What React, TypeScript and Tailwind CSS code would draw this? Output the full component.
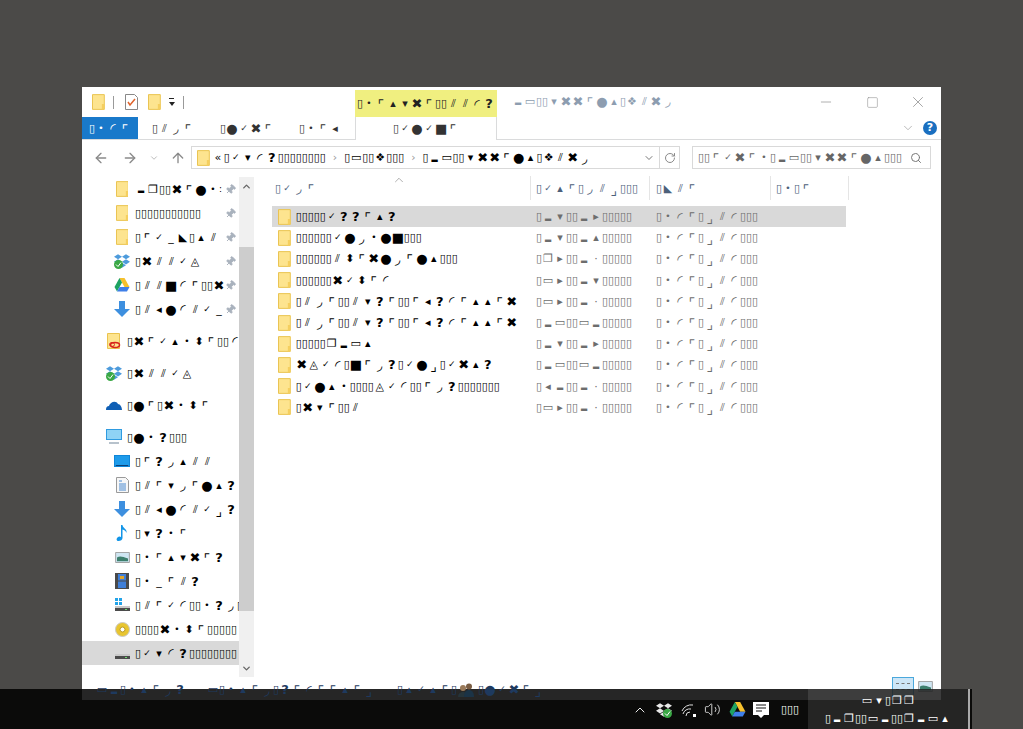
import { ArrowLeft, ArrowRight, ArrowUp, ChevronDown, ChevronUp, RotateCw, Search, Volume2, Pin, X, Minus, Square } from "lucide-react";
import { FaDropbox } from "react-icons/fa";
import type { ReactNode } from "react";

const glyphClass = (c: string) => {
  if (c === "▯") return "inline-block w-[6px] text-center text-[11px]";
  if (c === ":") return "inline-block w-[3px] text-center text-[9px]";
  if ("✓•".includes(c)) return "inline-block w-[12px] text-center text-[9px]";
  if (c === "?") return "inline-block w-[12px] text-center text-[13px] font-bold";
  if ("●■".includes(c)) return "inline-block w-[12px] text-center text-[13px]";
  if ("⌜⌟".includes(c)) return "inline-block w-[12px] pt-[3px] text-center text-[14px]";
  if ("◜◞".includes(c)) return "inline-block w-[12px] text-center text-[14px]";
  if (c === "✖") return "inline-block w-[12px] text-center text-[13px]";
  if (c === "▂") return "inline-block w-[12px] text-center text-[8px]";
  return "inline-block w-[12px] text-center text-[11px]";
};

// every character sits in its own cell, the tofu boxes are narrow
function Glyphs({ text, className = "" }: { text: string; className?: string }) {
  return (
    <span className={`inline-flex items-center whitespace-nowrap leading-none ${className}`}>
      {Array.from(text).map((c, i) => (
        <span key={i} className={glyphClass(c)}>
          {c}
        </span>
      ))}
    </span>
  );
}

function Folder({ size = 16 }: { size?: number }) {
  return (
    <svg width={size * 0.8} height={size} viewBox="0 0 13 16" className="shrink-0">
      <path d="M.5.5h12v15H.5z" fill="#fde48f" stroke="#eac34f" />
      <path d="M10 10h2.500v5.500H10z" fill="#f5cf5f" />
    </svg>
  );
}

function DropboxIcon({ tray }: { tray?: boolean }) {
  return (
    <span className={`relative flex h-[16px] w-[16px] shrink-0 ${tray ? "text-[#e8e8e8]" : "text-[#4d9bdc]"}`}>
      <FaDropbox size={16} />
      <svg width="9" height="9" viewBox="0 0 9 9" className={`absolute bottom-0 ${tray ? "right-0" : "left-0"}`}>
        <circle cx="4.500" cy="4.500" r="4.500" fill="#3aa845" />
        <path d="M2 4.500l2 2 3-4" fill="none" stroke="#fff" />
      </svg>
    </span>
  );
}

function DriveIcon({ size = 16 }: { size?: number }) {
  return (
    <svg width={size} height={size} viewBox="0 0 16 16" className="shrink-0">
      <path d="M5.500 1h5l5 9h-5z" fill="#f6c02c" />
      <path d="M5.500 1L.5 10l2.500 4.500L8 5.500z" fill="#1ea362" />
      <path d="M3 14.500h10l2.500-4.500h-10z" fill="#3f7fe8" />
    </svg>
  );
}

function DownArrow() {
  return (
    <svg width="16" height="16" viewBox="0 0 16 16" className="shrink-0">
      <path d="M5 0h6v8h5l-8 8-8-8h5z" fill="#3d8fdf" />
    </svg>
  );
}

function CloudFolder() {
  return (
    <svg width="14" height="16" viewBox="0 0 14 16" className="shrink-0">
      <path d="M.5.500h12v15H.5z" fill="#fde48f" stroke="#eac34f" />
      <ellipse cx="8" cy="12" rx="4.500" ry="2.500" fill="none" stroke="#d8261c" strokeWidth="1.500" />
      <ellipse cx="5" cy="11.500" rx="2.500" ry="2" fill="none" stroke="#d8261c" />
    </svg>
  );
}

function OneDriveIcon() {
  return (
    <svg width="16" height="10" viewBox="0 0 16 10" className="shrink-0">
      <path d="M0 10c0-3 1-4 3-4 1-4 7-6 9-2 2 0 4 3 4 6z" fill="#0f5fb5" />
    </svg>
  );
}

function MonitorIcon() {
  return (
    <svg width="16" height="16" viewBox="0 0 16 16" className="shrink-0">
      <path d="M0 0h16v11H0z" fill="#2f9be0" />
      <path d="M1 1h14v9H1z" fill="#8fd3f5" />
      <path d="M3 13h10v2H3z" fill="#b7c2cc" />
    </svg>
  );
}

function DesktopIcon() {
  return (
    <svg width="16" height="12" viewBox="0 0 16 12" className="shrink-0">
      <path d="M0 0h16v12H0z" fill="#0f86d8" />
      <path d="M1 1h14v9H1z" fill="#1e9bea" />
      <path d="M2 10.500h12" stroke="#0b3f75" />
    </svg>
  );
}

function DocIcon() {
  return (
    <svg width="13" height="16" viewBox="0 0 13 16" className="shrink-0">
      <path d="M.5.500h9l3 3v12H.5z" fill="#f7f7f7" stroke="#9a9a9a" />
      <path d="M3 4h3M3 7h7M3 9h7M3 11h7M3 13h7" stroke="#4b8ad0" />
    </svg>
  );
}

function MusicIcon() {
  return (
    <svg width="12" height="16" viewBox="0 0 12 16" className="shrink-0">
      <path d="M5 0h1.500c0 3 5 4 4 8-.5-2-2-3-4-3.500V13c0 2-2 3-4 3S0 14 1.500 12.500 4 11.500 5 12z" fill="#1295e8" />
    </svg>
  );
}

function PictureIcon() {
  return (
    <svg width="15" height="11" viewBox="0 0 16 12" className="shrink-0">
      <path d="M.5.500h15v11H.5z" fill="#cfe6f2" stroke="#9b9b9b" />
      <path d="M2 6c3-2 6-1 12 1v3H2z" fill="#3d7f6d" />
    </svg>
  );
}

function FilmIcon() {
  return (
    <svg width="14" height="16" viewBox="0 0 14 16" className="shrink-0">
      <path d="M0 0h14v16H0z" fill="#4a4a4a" />
      <path d="M3 1h8v6.500H3z" fill="#3f7fd8" />
      <path d="M3 8.500h8V15H3z" fill="#3f7fd8" />
      <path d="M5 3h4v3H5z" fill="#e0a52b" />
    </svg>
  );
}

function DriveBox({ win }: { win?: boolean }) {
  return (
    <svg width="15" height="14" viewBox="0 0 15 14" className="shrink-0">
      {win && <path d="M0 0h3v3H0zM4 0h3v3H4zM0 4h3v3H0zM4 4h3v3H4z" fill="#22a3e8" />}
      <path d="M0 8h15v2H0z" fill="#c9c9c9" />
      <path d="M0 10h15v3H0z" fill="#4b4b4b" />
      <path d="M10 11h2v1h-2z" fill="#6fe06f" />
    </svg>
  );
}

function DiscIcon() {
  return (
    <svg width="15" height="15" viewBox="0 0 15 15" className="shrink-0">
      <circle cx="7.500" cy="7.500" r="7" fill="#e8c530" stroke="#c9c9c9" />
      <circle cx="7.500" cy="7.500" r="2.500" fill="#fff" stroke="#b99a20" />
    </svg>
  );
}

function NavRow({ icon, text, indent = 2, pin, selected }: { icon: ReactNode; text: string; indent?: number; pin?: boolean; selected?: boolean }) {
  return (
    <div className={`flex h-[24px] items-center ${indent === 2 ? "pl-[32px]" : "pl-[24px]"} ${selected ? "bg-[#d9d9d9]" : ""}`}>
      <span className="flex w-[16px] shrink-0 items-center justify-center">{icon}</span>
      <span className="ml-[5px] flex min-w-0 flex-1 items-center overflow-hidden">
        <Glyphs text={text} />
      </span>
      {pin && <Pin size={11} className="mr-[3px] shrink-0 rotate-45 text-[#a9b2bd]" fill="#a9b2bd" />}
    </div>
  );
}

const TYPE = "▯•◜⌜▯⌟⫽◜▯▯▯";

const files = [
  ["▯▯▯▯▯✓??⌜▴?", "▯▂▾▯▯▂▸▯▯▯▯▯"],
  ["▯▯▯▯▯▯✓●◞•●■▯▯▯", "▯▂▾▯▯▂▴▯▯▯▯▯"],
  ["▯▯▯▯▯▯⫽⬍⌜✖●◞⌜●▴▯▯▯", "▯❐▸▯▯▂·▯▯▯▯▯"],
  ["▯▯▯▯▯▯✖✓⬍⌜◜", "▯▭▸▯▯▂▾▯▯▯▯▯"],
  ["▯⫽◞⌜▯▯⫽▾?⌜▯▯⌜◂?◜⌜▴▴⌜✖", "▯▭▸▯▯▂·▯▯▯▯▯"],
  ["▯⫽◞⌜▯▯⫽▾?⌜▯▯⌜◂?◜⌜▴▴⌜✖", "▯▂▭▯▯▭▂▯▯▯▯▯"],
  ["▯▯▯▯▯❐▂▭▴", "▯▂▾▯▯▂▸▯▯▯▯▯"],
  ["✖◬✓◜▯■⌜◞?▯✓●⌟▯✓✖▴?", "▯▂▭▯▯▭▂▯▯▯▯▯"],
  ["▯✓●▴•▯▯▯▯◬✓◜▯▯⌜◞?▯▯▯▯▯▯▯", "▯◂▂▯▯▂·▯▯▯▯▯"],
  ["▯✖▾⌜▯▯⫽", "▯▭▸▯▯▂·▯▯▯▯▯"],
];

export default function App() {
  return (
    <div className="relative h-[729px] w-[1023px] overflow-hidden bg-[#4b4a48] pt-[87px] pl-[82px] font-['DejaVu_Sans',sans-serif]">
      <div className="flex h-[613px] w-[859px] flex-col bg-white">
        {/* title bar */}
        <div className="flex h-[30px] shrink-0">
          <div className="flex w-[273px] items-center pl-[10px]">
            <Folder />
            <span className="ml-[8px] h-[13px] w-px bg-[#9a9a9a]" />
            <svg width="13" height="16" viewBox="0 0 13 16" className="ml-[11px]">
              <path d="M.5.500h9l3 3v12H.5z" fill="#fff" stroke="#888" />
              <path d="M3 8l2 3 5-6" fill="none" stroke="#e0632b" strokeWidth="1.500" />
            </svg>
            <span className="ml-[10px] flex"><Folder /></span>
            <span className="ml-[8px] flex h-[8px] w-[5px] flex-col justify-between">
              <span className="h-px w-[5px] bg-[#222]" />
              <span className="h-0 w-0 border-x-[3px] border-t-[4px] border-x-transparent border-t-[#222]" />
            </span>
            <span className="ml-[9px] h-[13px] w-px bg-[#9a9a9a]" />
          </div>
          <div className="mt-[3px] flex h-[27px] w-[142px] items-center justify-center bg-[#f0ef80] text-[#222]">
            <Glyphs text="▯•⌜▴▾✖⌜▯▯⫽⫽◜?" />
          </div>
          <div className="ml-[15px] flex items-center pb-[2px] text-[#8d9db0]">
            <Glyphs text="▂▭▯▯▾✖✖⌜●▴▯❖⫽✖◞" />
          </div>
          <div className="ml-auto flex text-[#8a8a8a]">
            <span className="flex w-[46px] items-center justify-center"><Minus size={16} strokeWidth={1} /></span>
            <span className="flex w-[46px] items-center justify-center"><Square size={13} strokeWidth={1} /></span>
            <span className="flex w-[46px] items-center justify-center"><X size={18} strokeWidth={1} /></span>
          </div>
        </div>

        {/* ribbon tabs */}
        <div className="flex h-[23px] shrink-0 border-b border-[#dadbdc] text-[#333]">
          <div className="flex w-[56px] items-center justify-center bg-[#1979ca] text-white">
            <Glyphs text="▯•◜⌜" />
          </div>
          <div className="flex w-[68px] items-center pl-[14px]"><Glyphs text="▯⫽◞⌜" /></div>
          <div className="flex w-[79px] items-center pl-[14px]"><Glyphs text="▯●✓✖⌜" /></div>
          <div className="flex w-[70px] items-center pl-[14px]"><Glyphs text="▯•⌜◂" /></div>
          <div className="-mb-px flex w-[142px] items-center justify-center border-x border-[#dadbdc] bg-white">
            <Glyphs text="▯✓●✓■⌜" />
          </div>
          <div className="ml-auto flex items-center pr-[4px]">
            <ChevronDown size={14} strokeWidth={1} className="text-[#8a8a8a]" />
            <span className="ml-[8px] flex h-[14px] w-[14px] items-center justify-center rounded-full bg-[#1a6fc0] text-[11px] font-bold text-white">?</span>
          </div>
        </div>

        {/* address bar */}
        <div className="flex h-[35px] shrink-0 items-center">
          <ArrowLeft size={16} className="ml-[11px] text-[#8a8a8a]" />
          <ArrowRight size={16} className="ml-[13px] text-[#8a8a8a]" />
          <ChevronDown size={10} className="ml-[11px] text-[#b0b0b0]" />
          <ArrowUp size={16} className="ml-[11px] text-[#8a8a8a]" />
          <div className="ml-[5px] flex h-[23px] w-[489px] items-center border border-[#d9d9d9] pl-[5px]">
            <Folder />
            <span className="ml-[2px] flex items-center overflow-hidden text-black">
              <Glyphs text="«▯✓▾◜?▯▯▯▯▯▯▯▯" />
              <span className="mx-[7px] text-[11px] leading-none text-[#999]">›</span>
              <Glyphs text="▯▭▯▯❖▯▯▯" />
              <span className="mx-[7px] text-[11px] leading-none text-[#999]">›</span>
              <Glyphs text="▯▂▭▯▯▾✖✖⌜●▴▯❖⫽✖◞" />
            </span>
            <ChevronDown size={12} className="ml-auto mr-[4px] text-[#777]" />
            <span className="flex h-full w-[20px] items-center justify-center border-l border-[#d9d9d9]">
              <RotateCw size={12} className="text-[#8a8a8a]" />
            </span>
          </div>
          <div className="ml-[12px] flex h-[23px] w-[239px] items-center border border-[#d9d9d9] pl-[5px] text-[#666]">
            <Glyphs text="▯▯⌜✓✖⌜•▯▂▭▯▯▾✖✖⌜●▴▯▯▯" />
            <Search size={12} className="ml-auto mr-[8px] text-[#777]" />
          </div>
        </div>

        {/* nav pane and file list */}
        <div className="flex min-h-0 flex-1 pt-[1px]">
          <div className="w-[157px] shrink-0 overflow-hidden pt-[1px]">
            <NavRow icon={<Folder />} text="▂❐▯▯✖⌜●•:" pin />
            <NavRow icon={<Folder />} text="▯▯▯▯▯▯▯▯▯▯▯" pin />
            <NavRow icon={<Folder />} text="▯⌜✓_◣▯▴⫽" pin />
            <NavRow icon={<DropboxIcon />} text="▯✖⫽⫽✓◬" pin />
            <NavRow icon={<DriveIcon />} text="▯⫽⫽■◜⌜▯▯✖" pin />
            <NavRow icon={<DownArrow />} text="▯⫽◂●◜⫽✓_" pin />
            <div className="h-[8px]" />
            <NavRow icon={<CloudFolder />} text="▯✖⌜✓▴•⬍⌜▯▯◜" indent={1} />
            <div className="h-[8px]" />
            <NavRow icon={<DropboxIcon />} text="▯✖⫽⫽✓◬" indent={1} />
            <div className="h-[8px]" />
            <NavRow icon={<OneDriveIcon />} text="▯●⌜▯✖•⬍⌜" indent={1} />
            <div className="h-[8px]" />
            <NavRow icon={<MonitorIcon />} text="▯●•?▯▯▯" indent={1} />
            <NavRow icon={<DesktopIcon />} text="▯⌜?◞▴⫽⫽" />
            <NavRow icon={<DocIcon />} text="▯⫽⌜▾◞⌜●▴?" />
            <NavRow icon={<DownArrow />} text="▯⫽◂●◜⫽✓⌟?" />
            <NavRow icon={<MusicIcon />} text="▯▾?•⌜" />
            <NavRow icon={<PictureIcon />} text="▯•⌜▴▾✖⌜?" />
            <NavRow icon={<FilmIcon />} text="▯•_⌜⫽?" />
            <NavRow icon={<DriveBox win />} text="▯⫽⌜✓◜▯▯•?◞▯" />
            <NavRow icon={<DiscIcon />} text="▯▯▯▯✖•⬍⌜▯▯▯▯▯" />
            <NavRow icon={<DriveBox />} text="▯✓▾◜?▯▯▯▯▯▯▯▯" selected />
          </div>

          {/* nav scrollbar */}
          <div className="mt-[1px] flex w-[15px] shrink-0 flex-col bg-[#f0f0f0]">
            <div className="flex h-[70px] items-start justify-center pt-[4px]">
              <ChevronUp size={11} strokeWidth={3} className="text-[#666]" />
            </div>
            <div className="h-[364px] bg-[#cdcdcd]" />
            <div className="flex flex-1 items-end justify-center pb-[3px]">
              <ChevronDown size={11} strokeWidth={3} className="text-[#666]" />
            </div>
          </div>

          <div className="min-w-0 flex-1">
            <div className="relative ml-[18px] flex h-[24px] text-[#4c607a]">
              <ChevronUp size={14} strokeWidth={1} className="absolute top-[-3px] left-[120px] text-[#777]" />
              <div className="flex w-[258px] items-center pl-[3px]"><Glyphs text="▯✓◞⌜" /></div>
              <div className="flex w-[119px] items-center border-l border-[#e5e5e5] pl-[5px]"><Glyphs text="▯✓▴⌜▯◞⫽⌟▯▯▯" /></div>
              <div className="flex w-[121px] items-center border-l border-[#e5e5e5] pl-[6px]"><Glyphs text="▯◣⫽⌜" /></div>
              <div className="flex w-[79px] items-center border-x border-[#e5e5e5] pl-[5px]"><Glyphs text="▯•▯⌜" /></div>
            </div>
            <div className="mt-[6px] ml-[18px] w-[574px]">
              {files.map(([name, date], i) => (
                <div key={i} className={`flex h-[21.2px] items-center ${i === 0 ? "bg-[#d9d9d9]" : ""}`}>
                  <div className="flex w-[258px] items-center pl-[6px] text-black">
                    <Folder />
                    <span className="ml-[5px] flex items-center"><Glyphs text={name} /></span>
                  </div>
                  <div className="flex w-[119px] items-center pl-[6px] text-[#6d6d6d]"><Glyphs text={date} /></div>
                  <div className="flex items-center pl-[7px] text-[#6d6d6d]"><Glyphs text={TYPE} /></div>
                </div>
              ))}
            </div>
          </div>
        </div>

        {/* status bar */}
        <div className="flex h-[23px] shrink-0 items-start pt-[4px] pl-[14px]">
          <div className="relative z-10 flex items-center text-[#1e3a5f]">
            <Glyphs text="▭▂▯•▴⌜◞?" />
            <span className="ml-[21px] flex items-center"><Glyphs text="▭▯•▴⌜◞▯?⌜◜⌜⌜▴⌜⌟" /></span>
            <span className="ml-[22px] flex items-center"><Glyphs text="▯▴✓▴⌜▯" /></span>
            <svg width="16" height="14" viewBox="0 0 16 14" className="ml-[1px] mr-[4px]">
              <circle cx="5" cy="5" r="3" fill="#9a7a5a" />
              <path d="M0 14c0-4 3-5 5-5s5 1 5 5z" fill="#26343a" />
              <circle cx="11" cy="3.500" r="3" fill="#7a5d43" />
              <path d="M6 14c0-6 3-7 5-7s5 1 5 7z" fill="#1b3346" />
            </svg>
            <Glyphs text="▯●✓✖⌜⌟" />
          </div>
          <div className="ml-auto mr-[8px] flex items-start">
            <span className="-mt-[4px] flex h-[20px] w-[22px] flex-col justify-center gap-[4px] border border-[#4aa8dc] bg-[#cde6f7] px-[3px]">
              <span className="h-[2px] border-t border-dashed border-[#777]" />
              <span className="h-[2px] border-t border-dashed border-[#777]" />
            </span>
            <span className="ml-[4px] flex"><PictureIcon /></span>
          </div>
        </div>
      </div>

      {/* taskbar */}
      <div className="absolute bottom-0 left-0 flex h-[40px] w-[972px] bg-black/85 text-white">
        <div className="flex w-[808px] items-center pt-[1px] pl-[632px]">
          <ChevronUp size={16} strokeWidth={1.5} className="text-[#eee]" />
          <span className="ml-[8px] flex"><DropboxIcon tray /></span>
          <svg width="16" height="14" viewBox="0 0 16 14" fill="none" stroke="#ddd" className="ml-[9px]">
            <path d="M1 8a10 10 0 0 1 11-6M2 11a7 7 0 0 1 8-5M5 13a4 4 0 0 1 4-4" />
            <path d="M12 11h3v3h-3z" fill="#fff" stroke="none" />
          </svg>
          <Volume2 size={17} strokeWidth={1.2} className="ml-[7px] text-[#eee]" />
          <span className="ml-[8px] flex"><DriveIcon size={17} /></span>
          <svg width="16" height="16" viewBox="0 0 16 16" className="ml-[7px]">
            <path d="M0 0h16v13h-5l-3 3-3-3H0z" fill="#fff" />
            <path d="M3 3h10M3 6h10M3 9h6" stroke="#111" />
          </svg>
          <span className="ml-[12px] flex"><Glyphs text="▯▯▯" /></span>
        </div>
        <div className="flex w-[160px] flex-col items-center justify-center gap-[7px] bg-white/[0.11]">
          <Glyphs text="▭▾▯❐❐" />
          <Glyphs text="▯▂❐▯▯▭▂▯▯❐▂▭▴" />
        </div>
        <div className="w-[2px] bg-[#aaa]" />
      </div>
    </div>
  );
}
